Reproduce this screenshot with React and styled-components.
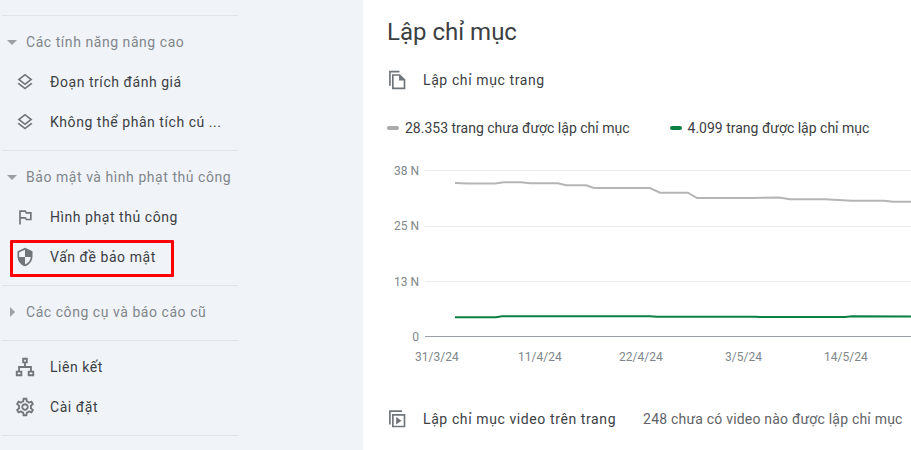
import React from "react";
import styled, { createGlobalStyle } from "styled-components";

const GlobalStyle = createGlobalStyle`
  html, body {
    margin: 0;
    padding: 0;
    background: #fff;
    font-family: Roboto, "Liberation Sans", sans-serif;
  }
`;

const Page = styled.div`
  display: flex;
  width: 911px;
  height: 450px;
  overflow: hidden;
  background: #fff;
`;

const Sidebar = styled.nav`
  flex: 0 0 363px;
  box-sizing: border-box;
  padding: 15px 0 0 2px;
  background: #f0f4f9;
`;

const Section = styled.section`
  width: 236px;
  box-sizing: border-box;
  padding: 6px 0 8px;
  border-bottom: 1px solid #e0e3e7;
  border-top: ${(p) => (p.$first ? "1px solid #e0e3e7" : "none")};
`;

const SectionHeader = styled.div`
  display: flex;
  align-items: center;
  height: 40px;
  color: #80868b;
  font-size: 14px;
  letter-spacing: 0.55px;
`;

const Caret = styled.svg`
  flex: none;
  width: 10px;
  height: 10px;
  margin: 0 9px 0 5px;
  fill: #9aa0a6;
`;

const Item = styled.div`
  position: relative;
  display: flex;
  align-items: center;
  height: 40px;
  color: #3c4043;
  font-size: 14px;
  letter-spacing: 0.55px;
`;

const ItemIcon = styled.svg`
  flex: none;
  width: ${(p) => p.$size}px;
  height: ${(p) => p.$size}px;
  margin: 0 ${(p) => 25 - p.$size / 2}px 0 ${(p) => 23 - p.$size / 2}px;
  fill: #70757a;
`;

const ItemLabel = styled.span`
  white-space: nowrap;
`;

const Highlight = styled.div`
  position: absolute;
  left: 8px;
  top: 3px;
  width: 164px;
  height: 37px;
  box-sizing: border-box;
  border: 3px solid #f00;
  border-radius: 1px;
`;

const Main = styled.main`
  flex: 1;
  min-width: 0;
  padding: 12px 0 0 24px;
`;

const Title = styled.h1`
  margin: 0;
  height: 40px;
  line-height: 40px;
  font-size: 24px;
  font-weight: 400;
  color: #3c4043;
`;

const ReportRow = styled.div`
  display: flex;
  align-items: center;
  height: 40px;
  margin-top: ${(p) => p.$top || 8}px;
  color: #3c4043;
  font-size: 14px;
  letter-spacing: 0.6px;
  white-space: nowrap;
`;

const RowIcon = styled.svg`
  flex: none;
  width: 20px;
  height: 20px;
  margin-right: 16px;
  fill: #70757a;
`;

const RowNote = styled.span`
  margin-left: 27px;
  color: #5f6368;
  letter-spacing: 0.2px;
`;

const Legend = styled.div`
  display: flex;
  align-items: center;
  height: 24px;
  margin-top: 16px;
  gap: 40px;
`;

const LegendEntry = styled.div`
  display: flex;
  align-items: center;
  gap: 6px;
  color: #3c4043;
  font-size: 14px;
  white-space: nowrap;
`;

const Swatch = styled.span`
  width: 12px;
  height: 4px;
  border-radius: 2px;
  background: ${(p) => p.$color};
`;

const Chart = styled.svg`
  display: block;
  width: 524px;
  height: 210px;
  margin: 20px 0 0 0;
`;

const AxisText = styled.text`
  font-family: Roboto, "Liberation Sans", sans-serif;
  font-size: 12px;
  fill: #80868b;
`;

const layers = "M11.99 18.54l-7.37-5.73L3 14.07l9 7 9-7-1.63-1.27-7.38 5.74zM12 16l7.36-5.73L21 9l-9-7-9 7 1.63 1.27L12 16zm0-11.47L17.74 9 12 13.47 6.26 9 12 4.53z";
const flag = "M14 6l-1-2H5v17h2v-7h5l1 2h7V6h-6zm4 8h-4l-1-2H7V6h5l1 2h5v6z";
const shield = "M12 1L3 5v6c0 5.55 3.84 10.74 9 12 5.16-1.26 9-6.45 9-12V5l-9-4zM12 3.2V12H5V6.3l7-3.1zM12 12h7c-.53 4.12-3.28 7.79-7 8.94V12z";
const network = "M9 2h6v6h-2v3h6.5v5H22v6h-7v-6h2.5v-3h-11v3H9v6H2v-6h2.5v-5H11V8H9V2zm2 2v2h2V4h-2zM4 18v2h3v-2H4zm13 0v2h3v-2h-3z";
const gear = "M19.43 12.98c.04-.32.07-.64.07-.98 0-.34-.03-.66-.07-.98l2.11-1.65c.19-.15.24-.42.12-.64l-2-3.46c-.09-.16-.26-.25-.44-.25-.06 0-.12.01-.17.03l-2.49 1c-.52-.4-1.08-.73-1.69-.98l-.38-2.65C14.46 2.18 14.25 2 14 2h-4c-.25 0-.46.18-.49.42l-.38 2.65c-.61.25-1.17.59-1.69.98l-2.49-1c-.06-.02-.12-.03-.18-.03-.17 0-.34.09-.43.25l-2 3.46c-.13.22-.07.49.12.64l2.11 1.65c-.04.32-.07.65-.07.98 0 .33.03.66.07.98l-2.11 1.65c-.19.15-.24.42-.12.64l2 3.46c.09.16.26.25.44.25.06 0 .12-.01.17-.03l2.49-1c.52.4 1.08.73 1.69.98l.38 2.65c.03.24.24.42.49.42h4c.25 0 .46-.18.49-.42l.38-2.65c.61-.25 1.17-.59 1.69-.98l2.49 1c.06.02.12.03.18.03.17 0 .34-.09.43-.25l2-3.46c.12-.22.07-.49-.12-.64l-2.11-1.65zm-1.98-1.71c.04.31.05.52.05.73 0 .21-.02.43-.05.73l-.14 1.13.89.7 1.08.84-.7 1.21-1.27-.51-1.04-.42-.9.68c-.43.32-.84.56-1.25.73l-1.06.43-.16 1.13-.2 1.35h-1.4l-.19-1.35-.16-1.13-1.06-.43c-.43-.18-.83-.41-1.23-.71l-.91-.7-1.06.43-1.27.51-.7-1.21 1.08-.84.89-.7-.14-1.13c-.03-.31-.05-.54-.05-.74s.02-.43.05-.73l.14-1.13-.89-.7-1.08-.84.7-1.21 1.27.51 1.04.42.9-.68c.43-.32.84-.56 1.25-.73l1.06-.43.16-1.13.2-1.35h1.39l.19 1.35.16 1.13 1.06.43c.43.18.83.41 1.23.71l.91.7 1.06-.43 1.27-.51.7 1.21-1.07.85-.89.7.14 1.13zM12 8c-2.21 0-4 1.79-4 4s1.79 4 4 4 4-1.79 4-4-1.79-4-4-4zm0 6c-1.1 0-2-.9-2-2s.9-2 2-2 2 .9 2 2-.9 2-2 2z";
const pages = "M2.5 1H15v2H4.5v16h-2V1zM6 5h9.5L22 11.5V23H6V5zm2 2v14h12V12.5h-5.5V7H8z";
const video = "M2.5 1.5H18v2H4.5v15h-2v-17zM6 6h16v16H6V6zm2 2v12h12V8H8zm3 1.5l6.5 4.5-6.5 4.5v-9z";

const grayLine = "455,183 467,183.5 495,183.5 504,182.3 521,182.3 530,183.2 558,183.2 566,185.3 586,185.3 594,188 650,188 660,192.7 688,192.7 697,198 751,198 779,197.5 790,199.3 825,199.3 852,200.7 884,200.7 893,201.7 911,201.7";
const greenLine = "455,317.3 496,317.3 502,316.2 650,316.2 657,316.7 755,316.8 760,317.1 845,317.1 852,316.3 911,316.6";

const yTicks = [
  { label: "38 N", y: 170, textY: 175 },
  { label: "25 N", y: 226, textY: 230 },
  { label: "13 N", y: 281, textY: 286 },
  { label: "0", y: 336, textY: 341 },
];
const xTicks = [
  { label: "31/3/24", x: 415 },
  { label: "11/4/24", x: 518 },
  { label: "22/4/24", x: 619 },
  { label: "3/5/24", x: 725 },
  { label: "14/5/24", x: 824 },
];

const Caption = ({ open, children }) => (
  <SectionHeader>
    <Caret viewBox="0 0 10 10">
      <path d={open ? "M0 3h10L5 8z" : "M3 0v10l5-5z"} />
    </Caret>
    {children}
  </SectionHeader>
);

const NavItem = ({ icon, size = 20, children, marked }) => (
  <Item>
    <ItemIcon $size={size} viewBox="0 0 24 24">
      <path d={icon} fillRule="evenodd" />
    </ItemIcon>
    <ItemLabel>{children}</ItemLabel>
    {marked && <Highlight />}
  </Item>
);

export default function App() {
  return (
    <Page>
      <GlobalStyle />
      <Sidebar>
        <Section $first>
          <Caption open>Các tính năng nâng cao</Caption>
          <NavItem icon={layers}>Đoạn trích đánh giá</NavItem>
          <NavItem icon={layers}>Không thể phân tích cú ...</NavItem>
        </Section>
        <Section>
          <Caption open>Bảo mật và hình phạt thủ công</Caption>
          <NavItem icon={flag}>Hình phạt thủ công</NavItem>
          <NavItem icon={shield} marked>Vấn đề bảo mật</NavItem>
        </Section>
        <Section>
          <Caption>Các công cụ và báo cáo cũ</Caption>
        </Section>
        <Section>
          <NavItem icon={network} size={22}>Liên kết</NavItem>
          <NavItem icon={gear} size={22}>Cài đặt</NavItem>
        </Section>
      </Sidebar>
      <Main>
        <Title>Lập chỉ mục</Title>
        <ReportRow>
          <RowIcon viewBox="0 0 24 24">
            <path d={pages} fillRule="evenodd" />
          </RowIcon>
          Lập chỉ mục trang
        </ReportRow>
        <Legend>
          <LegendEntry>
            <Swatch $color="#aaaaaa" />
            28.353 trang chưa được lập chỉ mục
          </LegendEntry>
          <LegendEntry>
            <Swatch $color="#0b8043" />
            4.099 trang được lập chỉ mục
          </LegendEntry>
        </Legend>
        <Chart viewBox="387 160 524 210">
          {yTicks.map((t) => (
            <g key={t.label}>
              <line
                x1="425"
                x2="911"
                y1={t.y + 0.5}
                y2={t.y + 0.5}
                stroke={t.y === 336 ? "#9aa0a6" : "#ececec"}
              />
              <AxisText x="419" y={t.textY} textAnchor="end">{t.label}</AxisText>
            </g>
          ))}
          {xTicks.map((t) => (
            <AxisText key={t.label} x={t.x} y="361">{t.label}</AxisText>
          ))}
          <polyline points={grayLine} fill="none" stroke="#b5b5b5" strokeWidth="2" />
          <polyline points={greenLine} fill="none" stroke="#0b8043" strokeWidth="2" />
        </Chart>
        <ReportRow $top={29}>
          <RowIcon viewBox="0 0 24 24">
            <path d={video} fillRule="evenodd" />
          </RowIcon>
          Lập chỉ mục video trên trang
          <RowNote>248 chưa có video nào được lập chỉ mục</RowNote>
        </ReportRow>
      </Main>
    </Page>
  );
}
